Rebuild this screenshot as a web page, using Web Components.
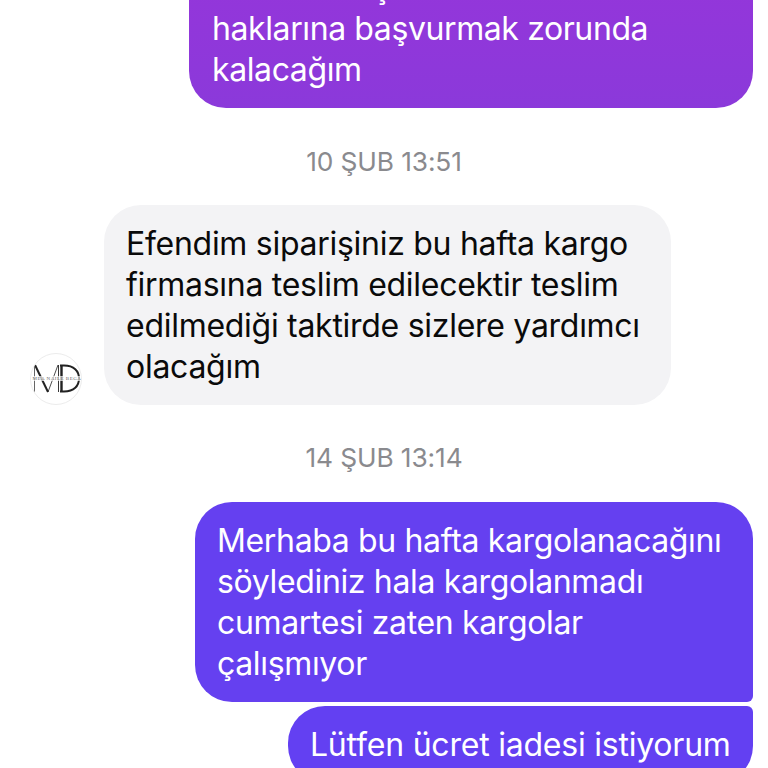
<!DOCTYPE html>
<html lang="tr"><head><meta charset="utf-8">
<style>html,body{margin:0;padding:0;background:#fff;overflow:hidden;height:768px}</style>
</head><body>
<chat-thread>
  <chat-bubble side="out" style="--bg:linear-gradient(#9635da,#8b39da);--w:564px;--ls:-.4px;--pl:23px;--tl:0px;--tr:0px;--br:37px;--bl:37px;margin-top:-51px">Aksi halde şu an<br>haklarına başvurmak zorunda<br>kalacağım</chat-bubble>
  <chat-date style="margin-top:39px">10 ŞUB 13:51</chat-date>
  <chat-row style="margin-top:28px">
    <brand-avatar slot="avatar"></brand-avatar>
    <chat-bubble side="in" style="--w:567px;--ls:-.28px">Efendim siparişiniz bu hafta kargo<br>firmasına teslim edilecektir teslim<br>edilmediği taktirde sizlere yardımcı<br>olacağım</chat-bubble>
  </chat-row>
  <chat-date style="margin-top:38px">14 ŞUB 13:14</chat-date>
  <chat-bubble side="out" style="--bg:#6540f0;--w:558px;--ls:-.35px;--br:6px;margin-top:29px">Merhaba bu hafta kargolanacağını<br>söylediniz hala kargolanmadı<br>cumartesi zaten kargolar<br>çalışmıyor</chat-bubble>
  <chat-bubble side="out" style="--bg:#6340f2;--w:465px;--ls:-.22px;--tr:6px;margin-top:4px">Lütfen ücret iadesi istiyorum</chat-bubble>
</chat-thread>
<script>
function def(name, css, html){
  customElements.define(name, class extends HTMLElement{
    constructor(){super();const r=this.attachShadow({mode:'open'});r.innerHTML='<style>'+css+'</style>'+html;}
  });
}
def('chat-thread',`:host{display:flex;flex-direction:column;width:768px;height:768px;overflow:hidden;font-family:Inter,"Liberation Sans",sans-serif}`,'<slot></slot>');
def('chat-bubble',`:host{display:block;box-sizing:border-box;flex:none;width:var(--w);padding:18px 22px 18px var(--pl,22px);font-size:32px;line-height:41px;letter-spacing:var(--ls,-.32px);white-space:nowrap;
  border-radius:var(--tl,37px) var(--tr,37px) var(--br,37px) var(--bl,37px)}
  :host([side=out]){align-self:flex-end;margin-right:15px;background:var(--bg);color:#fff}
  :host([side=in]){background:#f3f3f5;color:#0a0a0a}`,'<slot></slot>');
def('chat-date',`:host{display:block;text-align:center;font-size:26.3px;line-height:30px;color:#8a8a8e;letter-spacing:-.1px}`,'<slot></slot>');
def('chat-row',`:host{display:flex;align-items:flex-end;gap:22px;padding-left:30px}`,'<slot name="avatar"></slot><slot></slot>');
def('brand-avatar',`:host{display:block;width:52px;height:52px;flex:none}
  .c{position:relative;width:52px;height:52px;box-sizing:border-box;border:1px solid #ececec;border-radius:50%;background:#fff;overflow:hidden;display:flex;align-items:center;justify-content:center}
  svg{position:absolute;left:0;top:0}
  span{position:relative;font:5px "Liberation Serif",serif;color:#666;letter-spacing:.5px;white-space:nowrap;background:rgba(255,255,255,.7);margin-top:-1px;padding-left:2px}`,
  `<div class="c"><svg width="50" height="50" viewBox="0 0 50 50" fill="none" stroke="#222">
    <path d="M3.500 11V38" stroke-width=".7"/><path d="M4 11L17 38" stroke-width="2"/><path d="M17 38L27 11" stroke-width=".8"/><path d="M27.500 11V38" stroke-width=".9"/>
    <path d="M29 11.500H33C43 11.500 48 17 48 24.500C48 32 43 37.500 33 37.500H29" stroke-width="2"/><path d="M30.500 11.500V37.500" stroke-width="2.400"/></svg>
  <span>MEA NAILE BEGA</span></div>`);
</script>
</body></html>
